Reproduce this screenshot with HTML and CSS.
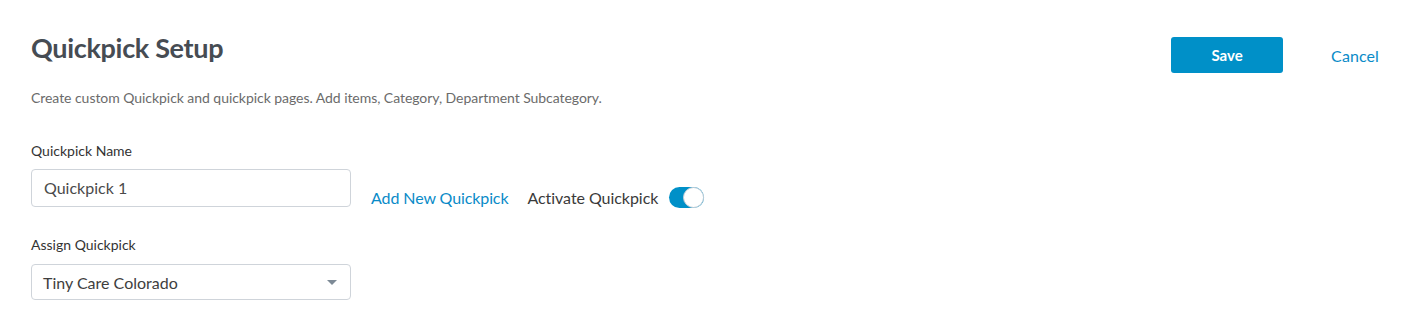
FILE: index.html
```html
<!DOCTYPE html>
<html>
<head>
<meta charset="utf-8">
<link rel="stylesheet" href="styles.css">
</head>
<body>
<div class="page">
  <div class="header">
    <div class="head-text">
      <h1 class="title">Quickpick Setup</h1>
      <p class="subtitle">Create custom Quickpick and quickpick pages. Add items, Category, Department Subcategory.</p>
    </div>
    <div class="actions">
      <button class="btn-save">Save</button>
      <a class="link cancel">Cancel</a>
    </div>
  </div>
  <div class="field">
    <label class="label">Quickpick Name</label>
    <div class="row">
      <div class="input">Quickpick 1</div>
      <a class="link add">Add New Quickpick</a>
      <span class="activate">Activate Quickpick</span>
      <span class="toggle"><span class="knob"></span></span>
    </div>
  </div>
  <div class="field">
    <label class="label">Assign Quickpick</label>
    <div class="select">
      <span>Tiny Care Colorado</span>
      <span class="caret"></span>
    </div>
  </div>
</div>
</body>
</html>
```

FILE: styles.css
```css
* { box-sizing: border-box; }
html, body { margin: 0; background: #fff; }
body { font-family: Lato, "Open Sans", sans-serif; color: #333; }
.page { padding: 30px 45px 0 31px; }
.header { display: flex; justify-content: space-between; align-items: flex-start; }
.title { margin: 0; font-size: 27px; font-weight: 700; color: #464c53; line-height: 36px; letter-spacing: -0.32px; }
.subtitle { margin: 24px 0 0; font-size: 14px; color: #6b6b6b; line-height: 16px; letter-spacing: -0.05px; }
.actions { display: flex; align-items: center; gap: 48px; margin-top: 7px; }
.btn-save { width: 112px; height: 36px; border: none; border-radius: 3px; background: #0090c8; color: #fff; font-family: Lato, sans-serif; font-weight: 700; font-size: 15px; padding: 0; }
.link { color: #0a8bc8; font-size: 16px; }
.cancel { letter-spacing: 0.1px; }
.field { margin-top: 37px; }
.field + .field { margin-top: 29px; }
.label { display: block; font-size: 14px; color: #333; line-height: 16px; margin-bottom: 8px; }
.field + .field .label { margin-bottom: 11px; }
.row { display: flex; align-items: center; }
.input { width: 320px; height: 38px; border: 1px solid #cfd4da; border-radius: 4px; padding: 0 12px; font-size: 16px; color: #4a4a4a; display: flex; align-items: center; }
.add { margin-left: 20px; margin-top: 20px; letter-spacing: -0.1px; }
.activate { margin-left: 19px; margin-top: 20px; font-size: 16px; color: #3a3a3a; letter-spacing: -0.05px; }
.toggle { margin-left: 11px; margin-top: 20px; width: 35px; height: 21px; border-radius: 11px; background: #0090c8; position: relative; }
.knob { position: absolute; right: 0; top: 0; width: 21px; height: 21px; border-radius: 50%; background: #fff; border: 1px solid #c8d0d8; }
.select { width: 320px; height: 36px; border: 1px solid #cfd4da; border-radius: 4px; padding: 0 13px 0 11px; font-size: 16px; color: #3e3e3e; display: flex; align-items: center; justify-content: space-between; }
.caret { width: 0; height: 0; border-left: 5px solid transparent; border-right: 5px solid transparent; border-top: 5px solid #7d8a96; }
```
